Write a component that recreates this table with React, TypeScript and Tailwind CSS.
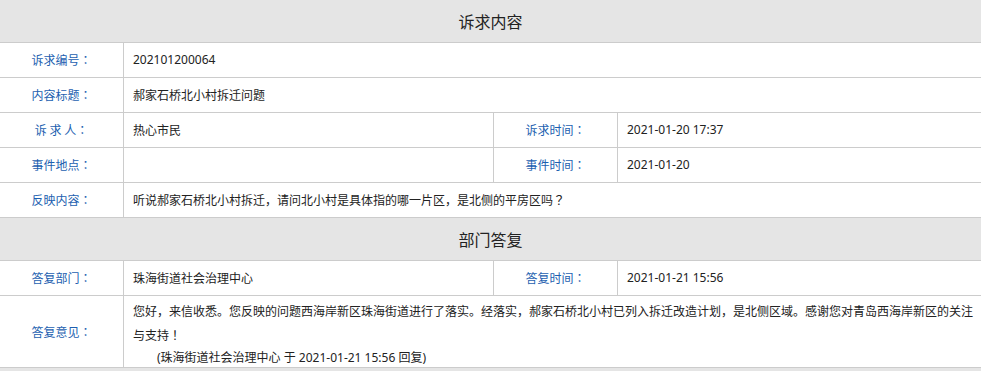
const cjk = "font-['Noto_Sans_CJK_SC','Noto_Sans',sans-serif]";
const latin = "font-['Noto_Sans','Noto_Sans_CJK_SC',sans-serif]";

const SectionHeader = ({ title }: { title: string }) => (
  <div className="h-[43px] bg-[#e5e5e5] border-b border-[#cccccc] text-center text-[16px] leading-[42px] text-[#222]">
    {title}
  </div>
);

// full-width punctuation, kept centred in its own em box
const Punct = ({ ch }: { ch: string }) => (
  <span className="inline-block w-[12px] text-center font-['Noto_Sans_CJK_TC',sans-serif]">{ch}</span>
);

const Label = ({ text }: { text: string }) => (
  <div className="w-[124px] shrink-0 border-r border-[#cccccc] flex items-center justify-center text-[#1d5fb0]">
    <span className="whitespace-pre">{text}</span>
    <Punct ch="：" />
  </div>
);

const Row = ({ children, className = 'h-[35px]' }: { children: React.ReactNode; className?: string }) => (
  <div className={`flex border-b border-[#cccccc] ${className}`}>{children}</div>
);

export default function App() {
  return (
    <div lang="zh-CN" className={`w-[981px] bg-white text-[12px] text-[#222] ${cjk}`}>
      <SectionHeader title="诉求内容" />

      <Row>
        <Label text="诉求编号" />
        <div className={`flex-1 flex items-center pl-[9px] ${latin}`}>202101200064</div>
      </Row>
      <Row>
        <Label text="内容标题" />
        <div className="flex-1 flex items-center pl-[9px]">郝家石桥北小村拆迁问题</div>
      </Row>
      <Row>
        <Label text="诉 求 人" />
        <div className="w-[370px] border-r border-[#cccccc] flex items-center pl-[9px]">热心市民</div>
        <Label text="诉求时间" />
        <div className={`flex-1 flex items-center pl-[9px] ${latin}`}>2021-01-20 17:37</div>
      </Row>
      <Row>
        <Label text="事件地点" />
        <div className="w-[370px] border-r border-[#cccccc] flex items-center pl-[9px]"></div>
        <Label text="事件时间" />
        <div className={`flex-1 flex items-center pl-[9px] ${latin}`}>2021-01-20</div>
      </Row>
      <Row>
        <Label text="反映内容" />
        <div className="flex-1 flex items-center pl-[9px]">
          <span>
            听说郝家石桥北小村拆迁，请问北小村是具体指的哪一片区，是北侧的平房区吗
            <Punct ch="？" />
          </span>
        </div>
      </Row>

      <SectionHeader title="部门答复" />

      <Row>
        <Label text="答复部门" />
        <div className="w-[370px] border-r border-[#cccccc] flex items-center pl-[9px]">珠海街道社会治理中心</div>
        <Label text="答复时间" />
        <div className={`flex-1 flex items-center pl-[9px] ${latin}`}>2021-01-21 15:56</div>
      </Row>
      <Row className="h-[72px]">
        <Label text="答复意见" />
        <div className="flex-1 pl-[9px] pt-[3px] leading-[23.5px]">
          <p>
            您好，来信收悉。您反映的问题西海岸新区珠海街道进行了落实。经落实，郝家石桥北小村已列入拆迁改造计划，是北侧区域。感谢您对青岛西海岸新区的关注与支持
            <Punct ch="！" />
          </p>
          <p className={`pl-[24px] ${latin}`}>(珠海街道社会治理中心 于 2021-01-21 15:56 回复)</p>
        </div>
      </Row>
      <div className="h-[10px] bg-[#e5e5e5]" />
    </div>
  );
}
